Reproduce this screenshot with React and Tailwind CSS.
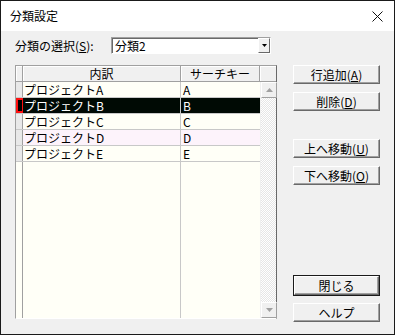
import React from "react";

const rows = [
  { name: "プロジェクトA", key: "A" },
  { name: "プロジェクトB", key: "B", selected: true },
  { name: "プロジェクトC", key: "C" },
  { name: "プロジェクトD", key: "D", pink: true },
  { name: "プロジェクトE", key: "E" },
];

const Btn = ({ children, primary, className = "" }) => (
  <div
    className={`${primary ? "border border-[#1a1a1a]" : ""} ${className}`}
  >
    <div className="flex h-[19px] items-center justify-center border border-t-white border-l-white border-r-[#696969] border-b-[#696969] bg-[#f0f0f0] shadow-[inset_-1px_-1px_0_#a0a0a0] text-[12px] leading-none text-black">
      {children}
    </div>
  </div>
);

const Arrow = ({ up }) => (
  <div className="flex h-[16px] w-[16px] items-center justify-center border border-t-white border-l-white border-r-[#a0a0a0] border-b-[#a0a0a0] bg-[#f0f0f0]">
    <svg width="7" height="4" viewBox="0 0 7 4">
      <polygon points={up ? "3.5,0 7,4 0,4" : "0,0 7,0 3.5,4"} fill="#a0a0a0" />
    </svg>
  </div>
);

const HeadCell = ({ className = "", children }) => (
  <div
    className={`flex h-full items-center justify-center border-r border-b border-r-[#a0a0a0] border-b-[#a0a0a0] bg-[#f0f0f0] shadow-[inset_1px_1px_0_#ffffff] ${className}`}
  >
    {children}
  </div>
);

export default function App() {
  return (
    <div className="flex h-[335px] w-[395px] flex-col border border-[#1a1a1a] font-[family-name:'Noto_Sans_CJK_JP',sans-serif] text-[12px] text-black">
      {/* title bar */}
      <div className="flex h-[30px] shrink-0 items-center justify-between bg-white pl-[9px] pr-[10px]">
        <span className="text-[12px] leading-none">分類設定</span>
        <svg width="11" height="11" viewBox="0 0 11 11" className="mr-[1px]">
          <path d="M0.5 0.5L10.5 10.5M10.5 0.5L0.5 10.5" stroke="#111" strokeWidth="1" />
        </svg>
      </div>

      <div className="flex-1 bg-[#f0f0f0] pl-[14px]">
        {/* selector row */}
        <div className="mt-[6px] flex h-[17px] items-center">
          <span className="w-[96px] leading-none">
            分類の選択(<span className="underline">S</span>):
          </span>
          <div className="flex h-[17px] w-[160px] items-stretch border border-t-[#a0a0a0] border-l-[#a0a0a0] border-r-white border-b-white bg-white shadow-[inset_1px_1px_0_#696969]">
            <div className="flex flex-1 items-center pl-[3px] leading-none">分類2</div>
            <div className="flex w-[12px] items-center justify-center border border-t-white border-l-white border-r-[#696969] border-b-[#696969] bg-[#f0f0f0]">
              <svg width="5" height="3" viewBox="0 0 5 3">
                <polygon points="0,0 5,0 2.5,3" fill="#000" />
              </svg>
            </div>
          </div>
        </div>

        {/* grid + buttons */}
        <div className="mt-[11px] flex">
          <div className="flex h-[254px] w-[262px] flex-col border border-t-[#a0a0a0] border-l-[#a0a0a0] border-r-[#696969] border-b-white">
            {/* header */}
            <div className="flex h-[16px] shrink-0 leading-none">
              <HeadCell className="w-[7px]" />
              <HeadCell className="w-[158px]">内訳</HeadCell>
              <HeadCell className="w-[79px]">サーチキー</HeadCell>
              <HeadCell className="w-[16px] border-r-0" />
            </div>
            {/* body */}
            <div className="flex flex-1">
              <div className="flex w-[244px] flex-col bg-[#fffff7]">
                {rows.map((r) => (
                  <div
                    key={r.key}
                    className={`flex h-[16px] shrink-0 border-b border-[#c8c8c8] leading-none ${
                      r.selected ? "bg-[#000a04] text-white" : r.pink ? "bg-[#fdf3fb]" : ""
                    }`}
                  >
                    <div
                      className={`w-[7px] border-r ${
                        r.selected
                          ? "border-2 border-[#ff1010] bg-black"
                          : "border-[#a0a0a0] bg-[#e8e8e8]"
                      }`}
                    />
                    <div className="flex w-[158px] items-center border-r border-[#c8c8c8] pl-[1px]">
                      {r.name}
                    </div>
                    <div className="flex w-[79px] items-center border-[#c8c8c8] pl-[2px]">
                      {r.key}
                    </div>
                  </div>
                ))}
                <div className="flex flex-1">
                  <div className="w-[7px] border-r border-[#a0a0a0]" />
                  <div className="w-[158px] border-r border-[#c8c8c8]" />
                  <div className="w-[79px]" />
                </div>
              </div>
              <div className="flex w-[16px] flex-col border-l border-[#f0f0f0]">
                <Arrow up />
                <div className="flex-1 bg-[repeating-conic-gradient(#ffffff_0_25%,#e6e6e6_0_50%)] bg-[length:2px_2px]" />
                <Arrow />
              </div>
            </div>
          </div>

          <div className="ml-[16px] flex w-[87px] flex-col">
            <Btn>
              行追加(<span className="underline">A</span>)
            </Btn>
            <Btn className="mt-[8px]">
              削除(<span className="underline">D</span>)
            </Btn>
            <Btn className="mt-[28px]">
              上へ移動(<span className="underline">U</span>)
            </Btn>
            <Btn className="mt-[8px]">
              下へ移動(<span className="underline">O</span>)
            </Btn>
            <Btn primary className="mt-[90px]">
              閉じる
            </Btn>
            <Btn className="mt-[7px]">ヘルプ</Btn>
          </div>
        </div>
      </div>
    </div>
  );
}
